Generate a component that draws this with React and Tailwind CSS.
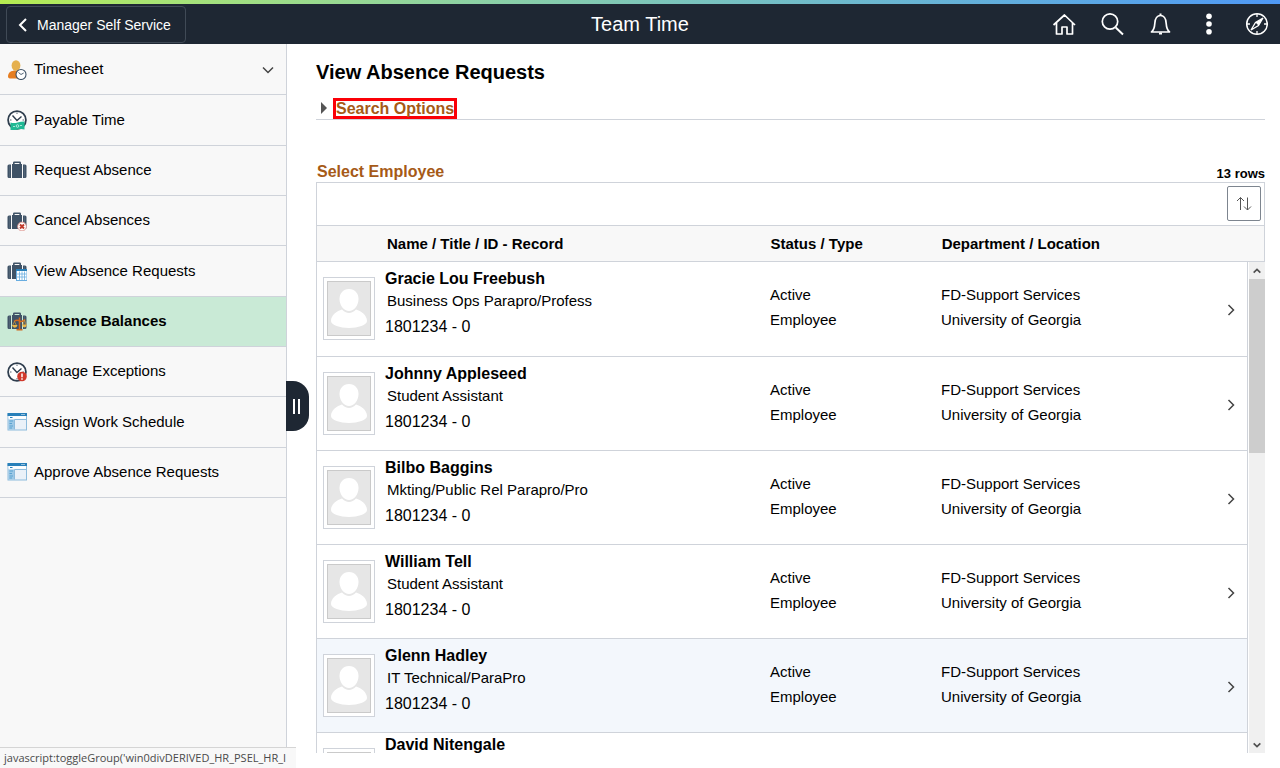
import { useState } from 'react'

const navItems = [
  { label: 'Timesheet', icon: PersonClockIcon, expandable: true },
  { label: 'Payable Time', icon: PayableIcon },
  { label: 'Request Absence', icon: SuitcaseIcon },
  { label: 'Cancel Absences', icon: CancelIcon },
  { label: 'View Absence Requests', icon: CalendarIcon },
  { label: 'Absence Balances', icon: BalanceIcon },
  { label: 'Manage Exceptions', icon: ExceptionIcon },
  { label: 'Assign Work Schedule', icon: WindowIcon },
  { label: 'Approve Absence Requests', icon: WindowIcon },
]

const employees = [
  { name: 'Gracie Lou Freebush', title: 'Business Ops Parapro/Profess', id: '1801234 - 0', status: 'Active', type: 'Employee', department: 'FD-Support Services', location: 'University of Georgia' },
  { name: 'Johnny Appleseed', title: 'Student Assistant', id: '1801234 - 0', status: 'Active', type: 'Employee', department: 'FD-Support Services', location: 'University of Georgia' },
  { name: 'Bilbo Baggins', title: 'Mkting/Public Rel Parapro/Pro', id: '1801234 - 0', status: 'Active', type: 'Employee', department: 'FD-Support Services', location: 'University of Georgia' },
  { name: 'William Tell', title: 'Student Assistant', id: '1801234 - 0', status: 'Active', type: 'Employee', department: 'FD-Support Services', location: 'University of Georgia' },
  { name: 'Glenn Hadley', title: 'IT Technical/ParaPro', id: '1801234 - 0', status: 'Active', type: 'Employee', department: 'FD-Support Services', location: 'University of Georgia', highlighted: true },
  { name: 'David Nitengale' },
]

function Svg({ children }) {
  return (
    <svg className="h-5 w-5 shrink-0" viewBox="0 0 20 20" fill="none" aria-hidden="true">
      {children}
    </svg>
  )
}

function Case() {
  return (
    <g fill="#3f5266">
      <path d="M6 4.500V2.700Q6 1.500 7.200 1.500h5.600Q14 1.500 14 2.700v1.800h-1.600V3.100H7.600v1.400z" />
      <rect x="5" y="4" width="10" height="14" />
      <path d="M4 4.500H2Q.5 4.500.5 6v10.500Q.5 18 2 18h2zM16 4.500h2q1.500 0 1.500 1.500v10.500q0 1.500-1.500 1.500h-2z" />
      <path d="M2.500 5v12.500M17.500 5v12.500" stroke="#5d6e7f" strokeWidth=".6" />
    </g>
  )
}

function ClockFace() {
  return (
    <g stroke="#2f3e4e">
      <circle cx="10" cy="10" r="8.900" fill="#fff" strokeWidth="1.800" />
      <path d="M5.500 5.500L10 10.500l4.500-4" strokeWidth="1.400" />
      <path d="M10 2.500v1.500M3 10h1.500M15.500 10H17M10 16v1.500" strokeWidth=".8" />
    </g>
  )
}

function PersonClockIcon() {
  return (
    <Svg>
      <path d="M1 16.500c0-4 3-6 7.500-6S15 13 15 18.500H4q-3 0-3-2z" fill="#e67e22" />
      <ellipse cx="9" cy="5.500" rx="4.400" ry="5.300" fill="#e5b04e" />
      <circle cx="14" cy="14.500" r="5" fill="#fff" stroke="#3f5266" strokeWidth="1.100" />
      <path d="M11.500 12.500l2.500 2 2.700-1.500" stroke="#3f5266" strokeWidth=".9" />
    </Svg>
  )
}

function PayableIcon() {
  return (
    <Svg>
      <ClockFace />
      <path d="M3.500 12.500q3.500 1 7 0t7-1v8q-3.500-1-7 0t-7 .5z" fill="#1fb994" />
      <circle cx="10.500" cy="16" r="1.300" stroke="#c9f3e8" strokeWidth=".8" />
      <path d="M6 16.500h2M13 15.500h2" stroke="#c9f3e8" strokeWidth=".8" />
    </Svg>
  )
}

function SuitcaseIcon() {
  return <Svg><Case /></Svg>
}

function CancelIcon() {
  return (
    <Svg>
      <Case />
      <circle cx="15" cy="15.500" r="4.400" fill="#fff" stroke="#d98880" strokeWidth=".8" />
      <path d="M13 13.500l4 4m0-4l-4 4" stroke="#c0392b" strokeWidth="1.900" />
    </Svg>
  )
}

function CalendarIcon() {
  return (
    <Svg>
      <Case />
      <rect x="9.500" y="9" width="10.500" height="10.500" fill="#fff" stroke="#69ade0" />
      <path d="M9 9h11" stroke="#2980b9" strokeWidth="2" />
      <path d="M10 13h9.500M10 16h9.500M12.500 10.500V19M15 10.500V19M17.500 10.500V19" stroke="#69ade0" strokeWidth=".8" />
    </Svg>
  )
}

function BalanceIcon() {
  return (
    <Svg>
      <Case />
      <path d="M12.500 6.500v12M7 10.500q3-2 5.500-.5t5.500-1.500M9.500 18.700h6" stroke="#d2691e" strokeWidth="1.500" />
      <path d="M7.500 10.500l-2 4M7.500 10.500l2 4M17.500 9l-1.700 5M17.500 9l1.700 5" stroke="#d79a3a" strokeWidth=".7" />
      <path d="M5 14h5.500q-.5 2.700-2.700 2.700T5 14zM15 13.500h4.800q-.4 2.700-2.400 2.700T15 13.500z" fill="#e8b548" />
    </Svg>
  )
}

function ExceptionIcon() {
  return (
    <Svg>
      <ClockFace />
      <circle cx="15" cy="14.500" r="4.800" fill="#d0392b" />
      <path d="M15 11.500v3.700M15 16.200v1.500" stroke="#fff" strokeWidth="1.500" />
    </Svg>
  )
}

function WindowIcon() {
  return (
    <Svg>
      <rect x="1" y="2" width="18.500" height="16" fill="#eaf1f8" stroke="#8dbbdc" />
      <path d="M.5 2.500h19.500" stroke="#2980b9" strokeWidth="3" />
      <path d="M14.500 2.500h1M16.500 2.500h1" stroke="#fff" />
      <path d="M1.500 5.500H19" stroke="#fff" strokeWidth="2.500" />
      <path d="M3 5.500h2.500" stroke="#2980b9" />
      <path d="M1.500 7.500h5.500v10H1.500z" fill="#9cc8e6" />
      <path d="M2.500 9h3.500M2.500 11.500h2.500M2.500 14h3.500M2.500 16h2.500" stroke="#5ba3d0" />
      <path d="M7.500 7.500h11.500M7.500 7.500v10" stroke="#8dbbdc" />
    </Svg>
  )
}

function Chevron({ d, className }) {
  return (
    <svg className={className} viewBox="0 0 12 12" fill="none" stroke="currentColor" aria-hidden="true">
      <path d={d} />
    </svg>
  )
}

function HeaderButton({ label, children }) {
  return (
    <button type="button" aria-label={label} className="flex h-10 w-12 items-center justify-center text-white">
      <svg className="h-6 w-6" viewBox="0 0 24 24" fill="none" stroke="currentColor" strokeWidth="1.700" aria-hidden="true">
        {children}
      </svg>
    </button>
  )
}

function TopBar() {
  return (
    <header className="shrink-0 bg-[#1e2733] text-white">
      <div className="h-1 bg-linear-to-r from-[#b6ec50] to-[#4f98f5]" />
      <div className="grid h-10 grid-cols-[1fr_auto_1fr] items-center">
        <button type="button" className="mt-px ml-1.5 flex h-[37px] items-center gap-2 justify-self-start rounded-sm border border-[#404a56] pr-3.5 pl-2.5 text-sm">
          <svg className="h-4 w-3" viewBox="0 0 12 16" fill="none" stroke="currentColor" strokeWidth="2" aria-hidden="true">
            <path d="M9 2L3 8l6 6" />
          </svg>
          Manager Self Service
        </button>
        <h1 className="text-xl">Team Time</h1>
        <div className="flex justify-self-end">
          <HeaderButton label="Home">
            <path d="M1.500 13L12.500 3l10.500 10M4.500 11v11h5.500v-7h5v7h5.500V11" strokeLinejoin="round" />
          </HeaderButton>
          <HeaderButton label="Search">
            <circle cx="10" cy="9.500" r="7.700" />
            <path d="M15.700 15.500l7.300 7" strokeWidth="2" />
          </HeaderButton>
          <HeaderButton label="Notifications">
            <path d="M3.500 20c2.500-2 3-4 3.300-8.500C7 6.500 9.500 3.500 12.500 3.500s5.500 3 5.700 8C18.500 16 19 18 21.500 20z" strokeLinejoin="round" />
            <path d="M12.500 1.500v2M11 21.500h3" strokeWidth="2" />
          </HeaderButton>
          <HeaderButton label="Actions">
            <g fill="currentColor" stroke="none">
              <circle cx="13" cy="4.300" r="2.800" />
              <circle cx="13" cy="12" r="2.800" />
              <circle cx="13" cy="19.700" r="2.800" />
            </g>
          </HeaderButton>
          <HeaderButton label="NavBar">
            <circle cx="13" cy="12" r="10.300" strokeWidth="1.500" />
            <path d="M19 6l-4.500 7.500L7 18l4.500-7.500z" strokeWidth="1.300" />
            <path d="M18.500 6.500L11.500 10.500l3 3z" fill="currentColor" stroke="none" />
            <path d="M13 2v3M13 19v3M3 12h3M20 12h3" strokeWidth="1.300" />
          </HeaderButton>
        </div>
      </div>
    </header>
  )
}

function Sidebar() {
  const [active, setActive] = useState('Absence Balances')

  return (
    <aside className="relative w-[287px] shrink-0 border-r border-[#cfd3da] bg-[#f8f8f8]">
      <nav className="flex h-[454px] flex-col pt-px">
        {navItems.map(({ label, icon: Icon, expandable }) => (
          <button
            key={label}
            type="button"
            onClick={() => setActive(label)}
            className={`flex flex-1 items-center gap-[7px] border-b border-[#cfd3da] pr-3 pl-[7px] text-left text-[15px] ${active === label ? 'bg-[#c9ead6] font-bold' : ''}`}
          >
            <Icon />
            <span className="flex-1">{label}</span>
            {expandable && <Chevron d="M1 3.500l5 5 5-5" className="h-3 w-3 stroke-[1.5] text-[#444]" />}
          </button>
        ))}
      </nav>
      <button
        type="button"
        aria-label="Collapse navigation"
        className="absolute top-1/2 left-full flex h-[50px] w-[23px] -translate-y-1/2 items-center justify-center gap-[3px] rounded-r-2xl bg-[#1e2733] pr-0.5"
      >
        <span className="h-[15px] w-0.5 bg-white" />
        <span className="h-[15px] w-0.5 bg-white" />
      </button>
    </aside>
  )
}

function Photo() {
  return (
    <div className="h-[63px] w-[52px] shrink-0 border border-[#cfd3da] bg-white p-[3px]">
      <svg className="h-full w-full border border-[#cacaca] bg-[#e6e6e6]" viewBox="0 0 42 53" aria-hidden="true">
        <path d="M3 39c0-6 6-10 11-11.500 4 4.500 10 4.500 14 0C33 29 39 33 39 39c0 4-9 7-18 7S3 43 3 39z" fill="#fff" />
        <path d="M21 7c6 0 9.500 4.500 9.500 10 0 6.500-4.500 12-9.500 12s-9.500-5.500-9.500-12C11.500 11.500 15 7 21 7z" fill="#fff" />
      </svg>
    </div>
  )
}

function EmployeeRow({ name, title, id, status, type, department, location, highlighted }) {
  return (
    <tr className={`grid h-[94px] grid-cols-[453fr_171fr_306fr] border-b border-[#cfd3da] first:h-[95px] last:h-auto last:border-b-0 ${highlighted ? 'bg-[#f3f7fc]' : ''}`}>
      <td className="flex gap-2.5 pl-1.5">
        <div className="pt-[15px]"><Photo /></div>
        <div className={title ? 'pt-[7px]' : 'pt-0.5'}>
          <p className="text-base leading-5 font-bold">{name}</p>
          {title && <p className="pl-0.5 text-[15px] leading-6">{title}</p>}
          {id && <p className="text-base leading-7">{id}</p>}
        </div>
      </td>
      <td className="pt-5 text-[15px] leading-[25px]">
        <p>{status}</p>
        <p>{type}</p>
      </td>
      <td className="flex justify-between pt-5 pr-2.5">
        <div className="text-[15px] leading-[25px]">
          <p>{department}</p>
          <p>{location}</p>
        </div>
        <button type="button" aria-label={`Open ${name}`} className="mt-[22px] h-3 text-[#444]">
          <Chevron d="M3.500 1l5 5-5 5" className="h-3 w-3 stroke-[1.5]" />
        </button>
      </td>
    </tr>
  )
}

function Scrollbar() {
  return (
    <div className="absolute top-[37px] right-0 bottom-0 flex w-4 flex-col bg-[#f0f0f0] text-[#505050]" aria-hidden="true">
      <div className="flex h-[17px] items-center justify-center">
        <Chevron d="M2 8l4-4 4 4" className="h-2.5 w-2.5 stroke-2" />
      </div>
      <div className="min-h-0 flex-1">
        <div className="h-[38%] bg-[#cdcdcd]" />
      </div>
      <div className="flex h-[17px] items-center justify-center">
        <Chevron d="M2 4l4 4 4-4" className="h-2.5 w-2.5 stroke-2" />
      </div>
    </div>
  )
}

export default function App() {
  return (
    <div className="relative flex h-screen flex-col overflow-hidden bg-white font-['Liberation_Sans',Arial,sans-serif] text-black">
      <TopBar />
      <div className="flex min-h-0 flex-1">
        <Sidebar />
        <main className="flex min-w-0 flex-1 flex-col pt-3.5 pr-[15px] pb-[15px] pl-[29px]">
          <h2 className="text-xl leading-7 font-bold">View Absence Requests</h2>
          <div className="mt-3 flex h-[22px] items-start gap-1.5 border-b border-[#cfd3da] pl-[5px]">
            <svg className="mt-1 h-3 w-1.5" viewBox="0 0 6 12" fill="#555" aria-hidden="true">
              <path d="M0 0l6 6-6 6z" />
            </svg>
            <button type="button" className="border-3 border-[#fb0007] text-base leading-[15px] font-bold text-[#a65a17]">
              Search Options
            </button>
          </div>
          <div className="mt-10 flex h-[22px] items-end justify-between">
            <h3 className="pl-px text-base leading-5 font-bold text-[#a65a17]">Select Employee</h3>
            <span className="text-[13px] leading-4 font-bold">13 rows</span>
          </div>
          <div className="flex h-[43px] items-start justify-end border border-b-0 border-[#cfd3da] p-[3px]">
            <button type="button" aria-label="Sort" className="flex h-[35px] w-[34px] items-center justify-center rounded-xs border border-[#7d858f] text-[#555]">
              <svg className="h-4 w-4" viewBox="0 0 16 16" fill="none" stroke="currentColor" aria-hidden="true">
                <path d="M4.500 14V1.500M1 5l3.500-3.500L8 5M11.500 1.500V14M8 10.500l3.500 3.500L15 10.500" />
              </svg>
            </button>
          </div>
          <div className="relative flex min-h-0 flex-1 flex-col">
            <table className="flex min-h-0 flex-1 flex-col">
              <thead className="block shrink-0 border border-[#cfd3da] bg-[#f8f8f8]">
                <tr className="mr-4 grid h-[35px] grid-cols-[453fr_171fr_306fr] items-center pt-0.5 text-left text-[15px]">
                  <th className="pl-[70px] font-bold">Name / Title / ID - Record</th>
                  <th className="font-bold">Status / Type</th>
                  <th className="font-bold">Department / Location</th>
                </tr>
              </thead>
              <tbody className="mr-[17px] block min-h-0 flex-1 overflow-hidden border-x border-[#cfd3da]">
                {employees.map((employee) => (
                  <EmployeeRow key={employee.name} {...employee} />
                ))}
              </tbody>
            </table>
            <Scrollbar />
          </div>
        </main>
      </div>
      <div className="absolute bottom-0 left-0 h-[21px] w-[296px] overflow-hidden border-t border-[#d5d5d5] bg-[#f8f8f8] pl-1 font-['Open_Sans',sans-serif] text-[11px] leading-5 whitespace-nowrap text-[#4a4a4a]">
        javascript:toggleGroup('win0divDERIVED_HR_PSEL_HR_I
      </div>
    </div>
  )
}
